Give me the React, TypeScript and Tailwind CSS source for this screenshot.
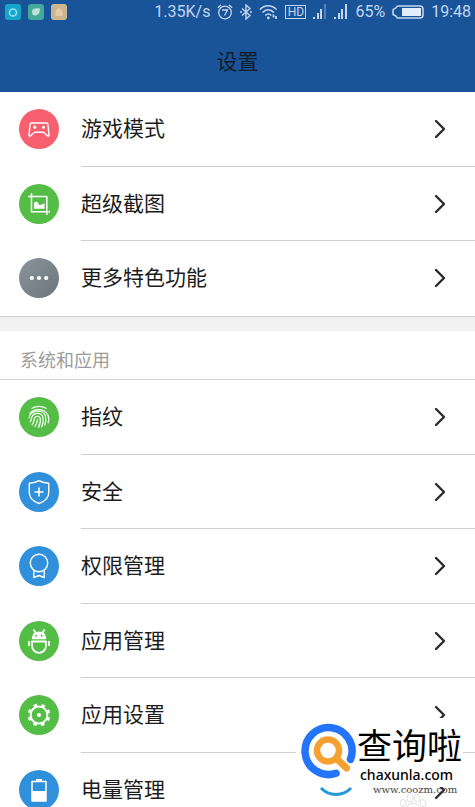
import type { ReactNode } from 'react';
import { ChevronRight } from 'lucide-react';

type Item = {
  label: string;
  color: string;
  icon: ReactNode;
};

const features: Item[] = [
  {
    label: '游戏模式',
    color: 'bg-[#f9606f]',
    icon: (
      <>
        <path d="M12.500 14h15c.9 0 1.300.4 1.400 1.300l1.100 10.700c.1 1.200-.8 1.500-1.600.8L24.500 23.300h-9l-3.900 3.500c-.8.7-1.700.4-1.600-.8l1.100-10.700c.1-.9.500-1.300 1.400-1.300z" />
        <path d="M14 18.300h3.400M15.700 16.600V20" />
        <circle cx="24.500" cy="18.300" r="1.500" fill="currentColor" stroke="none" />
      </>
    ),
  },
  {
    label: '超级截图',
    color: 'bg-[#54bd45]',
    icon: (
      <>
        <path d="M12.500 9v18.800H31M9 12.500h18.800V31" strokeWidth="1.500" />
        <path d="M15 24.800v-6c1.500-1.600 3.600-1.300 4.400.6.600 1.400 1.300 1.900 2.600 1.300l3.500-1.400v5.500z" fill="currentColor" stroke="none" />
      </>
    ),
  },
  {
    label: '更多特色功能',
    color: 'bg-linear-to-br from-[#8a949b] to-[#6c767d]',
    icon: (
      <g fill="currentColor" stroke="none">
        <circle cx="12.800" cy="20" r="2.100" />
        <circle cx="20" cy="20" r="2.100" />
        <circle cx="27.200" cy="20" r="2.100" />
      </g>
    ),
  },
];

const systemApps: Item[] = [
  {
    label: '指纹',
    color: 'bg-[#54bd45]',
    icon: (
      <g strokeWidth="1.200">
        <path d="M12.500 11.500c4.600-2.700 10.400-2.700 15 0" />
        <path d="M10.300 17c4-5.500 14.600-6.400 18.600 1 1.200 2.500 1 5.700.1 8.200" />
        <path d="M10 21.500c.6-8.800 15-10.300 16.600-1.700.6 3 .2 6-1 8.800" />
        <path d="M10.800 25.300c1.800-1.600 1.500-3.200 2-5 1.700-5.300 10-5.300 11.200.2.600 3.200 0 6.700-1.500 9.800" />
        <path d="M12.800 28c2.200-2 2.200-4.500 2.700-6.700 1-2.900 5.300-2.700 5.800.6.400 3.200-.4 6.200-2.200 8.900" />
        <path d="M15.700 29.800c2.100-2.500 2.800-5.200 2.900-8" />
      </g>
    ),
  },
  {
    label: '安全',
    color: 'bg-[#3190dc]',
    icon: (
      <>
        <path d="M20 8.700c3 1.900 6.200 2.600 9.700 2.600v9.500c0 5.200-3.600 8.500-9.700 10.700-6.100-2.200-9.700-5.500-9.700-10.700v-9.500c3.500 0 6.700-.7 9.700-2.600z" />
        <path d="M20 15.500v9M15.500 20h9" strokeWidth="1.600" />
      </>
    ),
  },
  {
    label: '权限管理',
    color: 'bg-[#3190dc]',
    icon: (
      <>
        <circle cx="20" cy="17" r="8.700" />
        <path d="M14.800 24.300v7.200l5.200-2 5.200 2v-7.200" />
      </>
    ),
  },
  {
    label: '应用管理',
    color: 'bg-[#54bd45]',
    icon: (
      <>
        <path d="M13.500 17.500c.2-4 2.700-6.300 6.500-6.300s6.300 2.300 6.500 6.300z" fill="currentColor" />
        <path d="m14.500 8.500 2.200 3.500M25.500 8.500 23.300 12M10 20v5M30 20v5" strokeWidth="1.800" />
        <path d="M13 20.500h14v4.300a7 7 0 0 1-14 0z" strokeWidth="1.800" />
        <g fill="#54bd45" stroke="none">
          <circle cx="17.300" cy="14.800" r="1" />
          <circle cx="22.700" cy="14.800" r="1" />
        </g>
      </>
    ),
  },
  {
    label: '应用设置',
    color: 'bg-[#54bd45]',
    icon: (
      <>
        <circle cx="20" cy="20" r="8.400" strokeWidth="2" />
        <circle cx="20" cy="20" r="10.200" strokeWidth="2.400" strokeDasharray="3.600 4.411" strokeDashoffset="-2.200" />
        <circle cx="20" cy="20" r="2" fill="currentColor" stroke="none" />
      </>
    ),
  },
  {
    label: '电量管理',
    color: 'bg-[#3190dc]',
    icon: (
      <>
        <path d="M13 11.500h14V31H13z" strokeWidth="1.500" />
        <path d="M17 9h6v2.500h-6zM13 21h14v10H13z" fill="currentColor" stroke="none" />
      </>
    ),
  },
];

function SettingRow({ item }: { item: Item }) {
  return (
    <li className="group flex odd:h-[75px] even:h-[74px]">
      <a href="#" className="flex flex-1 pl-[19px]">
        <span className={`mt-[17px] mr-[22px] size-10 shrink-0 rounded-full text-white ${item.color}`}>
          <svg viewBox="0 0 40 40" className="size-10" fill="none" stroke="currentColor" strokeWidth="1.400" strokeLinejoin="round">
            {item.icon}
          </svg>
        </span>
        <span className="flex flex-1 items-center justify-between border-b border-[#cfcfcf] pr-[19px] text-[21px] leading-7 text-[#1c1c1c] group-last:border-transparent">
          {item.label}
          <ChevronRight className="size-8 text-[#2b2b2b]" strokeWidth={1.8} />
        </span>
      </a>
    </li>
  );
}

function AppBadge({ color, children }: { color: string; children: ReactNode }) {
  return (
    <svg viewBox="0 0 16 16" className="size-4">
      <rect width="16" height="16" rx="3" fill={color} />
      {children}
    </svg>
  );
}

function SignalBars({ weak = false }: { weak?: boolean }) {
  return (
    <svg viewBox="0 0 14 16" className="h-4 w-3.5" fill="currentColor">
      <rect x="0" y="13" width="2" height="2" />
      <rect x="4" y="9" width="2" height="6" />
      <rect x="7" y="5" width="2" height="10" />
      <rect x="11" y="0" width="2" height="15" opacity={weak ? 0.35 : 1} />
    </svg>
  );
}

function StatusBar() {
  return (
    <div className="flex h-6 items-center justify-between pr-1 pl-[5px] text-base leading-6 text-[#c3d5f1]">
      <div className="flex gap-[7px]">
        <AppBadge color="#18a5cb">
          <circle cx="8" cy="8.500" r="3.500" fill="none" stroke="#8fe2f3" strokeWidth="1.600" />
        </AppBadge>
        <AppBadge color="#43a99a">
          <path d="M4 7.500c0-3 3-3.500 8-3-.2 5-2 7-5.500 7-1.500 0-2.500-1.500-2.500-4z" fill="#b9e2d4" />
        </AppBadge>
        <AppBadge color="#ccb391">
          <path d="M4.500 12V7L8 4l3.500 3v5z" fill="#e6cdaa" />
        </AppBadge>
      </div>
      <div className="flex items-center gap-[7px]">
        <span>1.35K/s</span>
        <svg viewBox="0 0 16 16" className="size-4" fill="none" stroke="currentColor" strokeWidth="1.300">
          <circle cx="8" cy="8.500" r="6.300" />
          <path d="M.8 3.800 4 1M15.200 3.800 12 1M5 6h5.500L7.500 11.500" />
        </svg>
        <svg viewBox="0 0 12 16" className="h-4 w-3" fill="none" stroke="currentColor" strokeWidth="1.400">
          <path d="m2 4.500 8 7L6 15V1l4 3.500-8 7M0 8h2M10 8h2" />
        </svg>
        <svg viewBox="0 0 19 16" className="h-4 w-[19px]" fill="none" stroke="currentColor" strokeWidth="1.600">
          <path d="M.8 5.500c5-5 11.800-5 16.800 0M3.500 8.500c3.500-3.500 8-3.500 11.500 0M6.300 11.500c2-2 4-2 6 0" />
          <circle cx="9.300" cy="14" r="1.400" fill="currentColor" stroke="none" />
          <path d="M14.500 10.500v3M17 12v3" strokeWidth="1.800" />
        </svg>
        <span className="flex h-[14px] w-[21px] items-center justify-center border border-current text-xs">HD</span>
        <SignalBars weak />
        <SignalBars />
        <span>65%</span>
        <svg viewBox="0 0 32 14" className="h-3.5 w-8">
          <path d="M6 1h22a3 3 0 0 1 3 3v6a3 3 0 0 1-3 3H6c-1.500 0-1.500-2-3-2.500C1.800 10.200 1 10 1 9V5c0-1 .8-1.200 2-1.500C4.500 3 4.500 1 6 1z" fill="none" stroke="currentColor" strokeWidth="1.600" />
          <rect x="10" y="3" width="19" height="8" fill="#e4edfb" />
        </svg>
        <span>19:48</span>
      </div>
    </div>
  );
}

function Watermark() {
  return (
    <div className="absolute right-3 bottom-5 flex h-[69px] w-[167px] bg-white font-['Noto_Sans','Noto_Sans_CJK_SC',sans-serif] text-black">
      <svg viewBox="0 0 61 80" className="h-20 w-[61px] shrink-0" fill="none" strokeLinecap="round">
        <path d="M54.500 41.400A23.500 23.500 0 1 0 40 55.300" stroke="#2474fa" strokeWidth="7.500" />
        <circle cx="32" cy="32.500" r="11" stroke="#f5a02f" strokeWidth="6.500" />
        <path d="m41 41 9.500 9" stroke="#f5a02f" strokeWidth="7" />
        <path d="M25 70c8 8.500 22 8.500 30 0" stroke="#239bd8" strokeWidth="3" strokeLinecap="butt" />
      </svg>
      <div className="flex flex-col pt-2 whitespace-nowrap">
        <span className="text-[35px] leading-10">查询啦</span>
        <span className="pl-[3px] text-sm leading-[18px] font-medium">chaxunla.com</span>
        <span className="pl-4 font-['DejaVu_Serif',serif] text-[10px] leading-3 text-[#444]">www.coozm.com</span>
      </div>
      <svg viewBox="0 0 28 14" className="absolute right-9 -bottom-5 h-3.5 w-7" fill="none" stroke="#e2e2e2">
        <ellipse cx="11" cy="5" rx="3" ry="4" />
        <ellipse cx="18" cy="5" rx="3" ry="4" />
        <ellipse cx="4" cy="10" rx="3" ry="3.500" />
        <ellipse cx="24" cy="10" rx="3" ry="3.500" />
        <path d="M8 14c1-5 11-5 12 0" />
      </svg>
    </div>
  );
}

export default function App() {
  return (
    <div className="relative flex h-screen flex-col overflow-hidden bg-white font-['Roboto','Noto_Sans_CJK_SC',sans-serif]">
      <header className="h-[92px] shrink-0 bg-[#195499]">
        <StatusBar />
        <h1 className="pt-6 text-center text-[21px] leading-7 text-[#131c28]">设置</h1>
      </header>
      <main className="flex-1 overflow-y-auto [scrollbar-width:none]">
        <ul>
          {features.map((item) => (
            <SettingRow key={item.label} item={item} />
          ))}
        </ul>
        <div className="h-[15px] border-t border-[#cfcfcf] bg-[#f1f1f1]" />
        <h2 className="border-b border-[#cfcfcf] px-5 pt-3 text-lg leading-9 text-[#9b9b9b]">系统和应用</h2>
        <ul>
          {systemApps.map((item) => (
            <SettingRow key={item.label} item={item} />
          ))}
        </ul>
      </main>
      <Watermark />
    </div>
  );
}
